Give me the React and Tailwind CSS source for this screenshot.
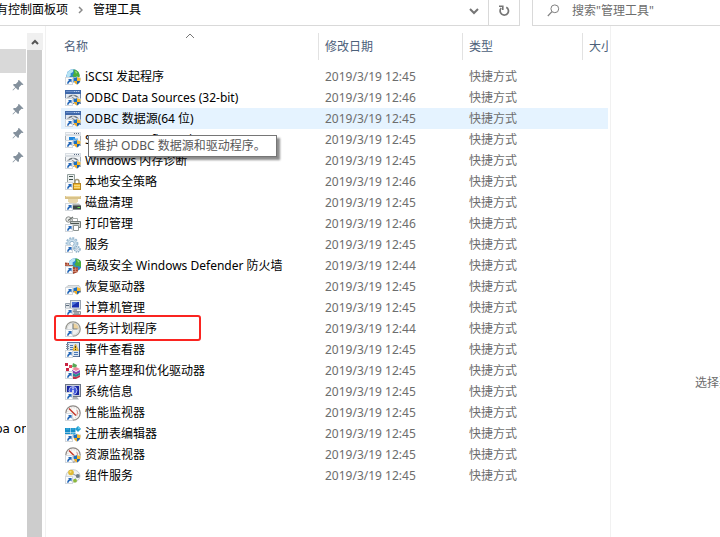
import React from "react";

function Arrow() {
  return (
    <g>
      <rect x="0.5" y="8.5" width="7" height="7" fill="#fdfdfd" stroke="#d3d8dd" />
      <path d="M3 10h3.600v3.600l-1.200-1.200C4.300 13 3.700 13.700 3.500 14.800H2.100c0-1.800.6-2.900 2.100-3.600z" fill="#2467b8" />
    </g>
  );
}

function Shield() {
  return (
    <g>
      <path d="M12 7.200c1.100 1 2.400 1.300 4 1.400 0 3.400-.8 5.900-4 7.400-3.200-1.500-4-4-4-7.400 1.600-.1 2.900-.4 4-1.400z" fill="#d9dde0" />
      <path d="M12 8v4H8.800c-.2-.9-.3-1.700-.3-2.800C9.900 9.100 11 8.800 12 8z" fill="#1c6fc0" />
      <path d="M12 8c1 .8 2.100 1.100 3.500 1.200 0 1.100-.1 1.900-.3 2.800H12z" fill="#f7b92e" />
      <path d="M8.800 12H12v3.500c-1.700-.8-2.700-2-3.200-3.500z" fill="#f0ab22" />
      <path d="M15.200 12H12v3.500c1.700-.8 2.700-2 3.200-3.500z" fill="#1760ac" />
    </g>
  );
}

function WindowFrame({ blue }) {
  return (
    <g>
      <rect x="0.500" y="0.500" width="15" height="13" fill={blue ? "#e3e9f2" : "#f3f5f7"} stroke={blue ? "#7188aa" : "#a6aeb6"} />
      <rect x="0" y="0" width="16" height="4" fill={blue ? "#3f68aa" : "#d9dee3"} />
      <path d="M1 1.500h14" stroke={blue ? "#6b90ca" : "#f3f5f7"} />
      <path d="M9 1.500h1M11 1.500h1M13 1.500h1" stroke={blue ? "#b9cdec" : "#5c6d86"} />
    </g>
  );
}

function Dial() {
  return (
    <g>
      <path d="M2.500 8.500C4 6 6 5.300 8 5.300s4 .7 5.500 3.200" fill="none" stroke="#aeb4ba" strokeWidth="1.600" />
      <path d="M4 6.500l3-1M9.500 5.500l3 1.200" stroke="#5d646b" />
      <path d="M6.500 7l4 1.500-1 1.500z" fill="#3f464d" />
    </g>
  );
}

function Gauge() {
  return (
    <g>
      <circle cx="8" cy="8" r="7.200" fill="#faf8f6" stroke="#8d8986" strokeWidth="1.200" />
      <circle cx="8" cy="8" r="5.300" fill="none" stroke="#d0cac5" strokeDasharray="1 1.500" />
      <path d="M4 3.500l7 7" stroke="#c3392c" strokeWidth="1.500" />
      <path d="M11.800 5.200c1.100 2 .8 3.800-.5 5.300" fill="none" stroke="#d58078" />
    </g>
  );
}

function Globe() {
  return (
    <g>
      <circle cx="8" cy="6.800" r="6.600" fill="#2c87cf" />
      <path d="M2.500 3.500C4 1.300 6.500.2 8.500.3L8 3 5.500 4.500 5.800 6.500 3 9C1.400 7.500 1.500 5 2.500 3.500z" fill="#b7e3f4" />
      <path d="M8.500.4c2.600.1 4.900 1.600 5.700 4.100.6 1.700.4 3.300-.5 4.700L11.500 8 9.500 8.500 7.500 6.500 9 4z" fill="#4aae3d" />
      <path d="M10 1.500l2.500 1.700-1.500 1.500z" fill="#9bd97f" />
      <path d="M3.500 8.500l3-1 2 2-1 3C6 12.400 4.300 11.200 3.500 8.500z" fill="#5cb644" />
    </g>
  );
}

const drawings = {
  globe: <><Globe /><Arrow /><Shield /></>,
  odbc: <><WindowFrame blue /><Dial /><Arrow /><Shield /></>,
  config: (
    <>
      <WindowFrame />
      <path d="M4 5h6v3H4z" fill="#1f86dc" />
      <path d="M8 6.500h5v3H8z" fill="#56aaea" />
      <Arrow /><Shield />
    </>
  ),
  memory: <><WindowFrame /><Dial /><Arrow /><Shield /></>,
  policy: (
    <>
      <path d="M2.500.5h7v12h-7z" fill="#edf0f0" stroke="#93a09e" />
      <path d="M4 2.500h4M4 5.500h4" stroke="#3f524d" />
      <Arrow />
      <path d="M10 10V7.500c0-2.700 4-2.700 4 0V10" fill="none" stroke="#a09777" strokeWidth="1.400" />
      <rect x="8.500" y="9.500" width="7" height="6" fill="#efb935" stroke="#b58522" />
      <path d="M9 11.500h6M9 13.500h6" stroke="#f9da7a" />
    </>
  ),
  disk: (
    <>
      <path d="M0 1h16v3H0z" fill="#d9c288" />
      <path d="M1 1.500h14" stroke="#efdfb4" />
      <path d="M3 4h10v2.500l-2 2H5l-2-2z" fill="#e8d8ac" />
      <path d="M2 8.500h12l2 2v4H1z" fill="#b3b9b7" />
      <rect x="7" y="10.500" width="9" height="4" fill="#3e4946" />
      <path d="M12.500 12.500H15" stroke="#66de51" />
      <Arrow />
    </>
  ),
  printer: (
    <>
      <circle cx="3.500" cy="3.500" r="2.700" fill="#eff0ee" stroke="#858987" />
      <path d="M3 4.500l5-3.500" stroke="#6a706d" strokeWidth="1.300" />
      <path d="M7.500 2.500h5v4h-5z" fill="#fff" stroke="#a9aeac" />
      <path d="M5.500 5.500h10v6h-10z" fill="#cbd0cd" stroke="#747c79" />
      <path d="M6 7.500h8" stroke="#4c5550" />
      <path d="M8.500 9.500h5v5h-5z" fill="#fff" stroke="#8b9290" />
      <Arrow />
    </>
  ),
  services: (
    <>
      <circle cx="7" cy="6.500" r="5.500" fill="#e2eef6" stroke="#9cbbd2" strokeWidth="1.800" strokeDasharray="2 1.200" />
      <circle cx="7" cy="6.500" r="4.300" fill="#cfe2ef" stroke="#a9c6da" />
      <circle cx="7" cy="6.500" r="2.200" fill="#fff" stroke="#8fb1ca" />
      <circle cx="12.300" cy="12.300" r="2.700" fill="#e2eff7" stroke="#86a9c3" strokeWidth="1.500" strokeDasharray="1.400 .8" />
      <circle cx="12.300" cy="12.300" r="1" fill="#fff" stroke="#90adc2" strokeWidth=".6" />
      <Arrow />
    </>
  ),
  firewall: (
    <>
      <g transform="translate(2 0)"><Globe /></g>
      <path d="M0 4.500l4 .5v2l4 .5V9l5 .5V14l-5 2-6-1-2-2z" fill="#a3452f" />
      <path d="M0 6.800l4 .5M8 11.500l5-.5M8 13.500h5M2.500 5v2M10.500 9.500v4.500" stroke="#dc9a82" strokeWidth=".7" />
      <Arrow />
    </>
  ),
  recovery: (
    <>
      <path d="M1 8.500L3 6.500h11l2 3v4H1z" fill="#dde1e3" stroke="#adb4b8" strokeWidth=".6" />
      <path d="M7 9.500h9V13H7z" fill="#59646a" />
      <Arrow /><Shield />
    </>
  ),
  computer: (
    <>
      <rect x="5.500" y=".5" width="10" height="8.500" fill="#dfe5eb" stroke="#98a3b0" />
      <rect x="7" y="2" width="7" height="5.500" fill="#1a2fae" />
      <path d="M7 2h6L7 6z" fill="#4d73d8" />
      <path d="M9 9h3v2h2v1H8v-1z" fill="#a0a8ae" />
      <path d="M.5 3.500H5v6H.5z" fill="#e2e6ea" stroke="#9aa5b0" />
      <path d="M1 5.500h3" stroke="#5c6d7e" />
      <path d="M7.500 11.500h8v3h-8z" fill="#d7dadc" stroke="#8c9499" />
      <path d="M9 13h5" stroke="#66727d" />
      <Arrow />
    </>
  ),
  clock: (
    <>
      <circle cx="8" cy="8" r="7.200" fill="#f1f1ef" stroke="#96968f" strokeWidth="1.300" />
      <path d="M8 2a6 6 0 016 6H8z" fill="#ecd29d" />
      <circle cx="8" cy="8" r="5.900" fill="none" stroke="#d0d3d2" strokeWidth=".7" />
      <path d="M8 2.500V8h4.500" fill="none" stroke="#7b8286" strokeWidth="1.200" />
      <Arrow />
    </>
  ),
  events: (
    <>
      <rect x="2.500" y=".5" width="12" height="14" fill="#dbe6f2" stroke="#5c769e" />
      <path d="M14.500 1v14" stroke="#34507e" />
      <path d="M1 2.500h3M1 4.500h3M1 6.500h3" stroke="#868f99" />
      <path d="M5 3.500h3M5 5.500h3M5 7.500h3M9 10.500h4M9 12.500h4" stroke="#4a77b4" />
      <path d="M10.500 2l3 6.500h-6z" fill="#f5c63c" stroke="#c79a30" strokeWidth=".6" />
      <path d="M10.500 4v2.200M10.500 7v1" stroke="#3c3520" strokeWidth=".9" />
      <Arrow />
    </>
  ),
  defrag: (
    <>
      <path d="M0 0h3v3H0zM1 5h3v3H1z" fill="#c92443" />
      <path d="M4 2h3v3H4z" fill="#e0485d" />
      <path d="M8 0l4 2-1 3-4-1z" fill="#58a856" />
      <path d="M7 6l4-2 4 2-4 2z" fill="#f08aa0" />
      <path d="M7 7l4 2 4-2v2.500l-4 2-4-2z" fill="#8a3fb0" />
      <path d="M7 9.500l4 2 4-2V12l-4 2-4-1z" fill="#258a91" />
      <path d="M7 13l4 1 4-2v2l-4 2H7z" fill="#c2334c" />
      <Arrow />
    </>
  ),
  info: (
    <>
      <rect x=".5" y=".5" width="15" height="12" fill="#c9ced8" stroke="#6f7787" />
      <rect x="2" y="2" width="12" height="9" fill="#1624a2" />
      <circle cx="8" cy="6.500" r="4" fill="#4057d8" stroke="#d4dcfa" strokeWidth=".8" />
      <path d="M8 3.500v1.200M8 5.700v3.600" stroke="#fff" strokeWidth="1.400" />
      <path d="M8 13h4l2 2.500H8z" fill="#a9afb4" />
      <Arrow />
    </>
  ),
  gauge: <><Gauge /><Arrow /></>,
  registry: (
    <>
      <path d="M0 2h5v4H0zM5.500 2h5v4h-5zM0 6.500h5V11H0zM5.500 6.500h5V11h-5z" fill="#168dc8" />
      <path d="M1 3h3M6.500 3h3M6.500 7.500h3" stroke="#43b3e0" />
      <path d="M13 0l3 3-3 3-3-3z" fill="#24a1d3" />
      <path d="M13 0l3 3h-3z" fill="#5cc2e6" />
      <Arrow /><Shield />
    </>
  ),
  resource: <><Gauge /><Arrow /><Shield /></>,
  component: (
    <>
      <ellipse cx="8" cy="8" rx="7" ry="6.300" fill="#eef1f2" stroke="#c9cfd2" />
      <circle cx="6" cy="4.500" r="2.800" fill="#dfba34" />
      <circle cx="5.500" cy="3.800" r="1.100" fill="#f4df7c" />
      <circle cx="12.800" cy="8" r="2" fill="#6e7b85" />
      <circle cx="10" cy="12.700" r="1.900" fill="#8bb83c" />
      <path d="M8 6l3 1.500M10.500 10.500l1-1" stroke="#8f9aa1" />
      <Arrow />
    </>
  ),
};

const files = [
  ["globe", "iSCSI 发起程序", "12:45"],
  ["odbc", "ODBC Data Sources (32-bit)", "12:46"],
  ["odbc", "ODBC 数据源(64 位)", "12:45"],
  ["config", "System Configuration", "12:45"],
  ["memory", "Windows 内存诊断", "12:45"],
  ["policy", "本地安全策略", "12:46"],
  ["disk", "磁盘清理", "12:45"],
  ["printer", "打印管理", "12:46"],
  ["services", "服务", "12:45"],
  ["firewall", "高级安全 Windows Defender 防火墙", "12:44"],
  ["recovery", "恢复驱动器", "12:45"],
  ["computer", "计算机管理", "12:45"],
  ["clock", "任务计划程序", "12:44"],
  ["events", "事件查看器", "12:45"],
  ["defrag", "碎片整理和优化驱动器", "12:45"],
  ["info", "系统信息", "12:45"],
  ["gauge", "性能监视器", "12:45"],
  ["registry", "注册表编辑器", "12:45"],
  ["resource", "资源监视器", "12:45"],
  ["component", "组件服务", "12:45"],
];

function Pin() {
  return (
    <svg width="12" height="12" viewBox="0 0 12 12" className="block" aria-hidden="true">
      <path d="M7 1l4.500 4.500-1 .5-1-.2L7 8.300v2L6 11 3.700 8.700 1 11.500l-.5-.5L3.300 8.200 1 6l.8-1h2L6.200 2.500 6 1.500z" fill="#84919d" />
    </svg>
  );
}

function AddressBar() {
  return (
    <header className="flex h-[26px] shrink-0 items-stretch">
      <div className="flex min-w-0 flex-1 border-r border-b border-[#d9d9d9]">
        <nav aria-label="路径" className="flex min-w-0 flex-1 items-start overflow-hidden whitespace-nowrap leading-5">
          <a href="#panel" className="-ml-1">有控制面板项</a>
          <svg width="5" height="8" viewBox="0 0 5 8" className="mx-2.5 mt-1.5 shrink-0" aria-hidden="true">
            <path d="M1 1l3 3-3 3" fill="none" stroke="#8a8a8a" strokeWidth="1.500" />
          </svg>
          <a href="#tools">管理工具</a>
        </nav>
        <button type="button" aria-label="以前的位置" className="flex w-7 items-start justify-center pt-2">
          <svg width="10" height="7" viewBox="0 0 10 7"><path d="M1 1l4 4 4-4" fill="none" stroke="#757575" strokeWidth="2" /></svg>
        </button>
        <button type="button" aria-label="刷新" className="flex w-[31px] items-start justify-center border-l border-[#d9d9d9] pt-1">
          <svg width="12" height="13" viewBox="0 0 12 13">
            <path d="M8.300 3.200A4.200 4.200 0 113.200 4" fill="none" stroke="#757575" strokeWidth="1.700" />
            <path d="M1 2.200h3.800V6" fill="none" stroke="#757575" strokeWidth="1.600" />
          </svg>
        </button>
      </div>
      <label className="ml-3 flex w-[188px] items-start border-b border-l border-[#d9d9d9] pl-3.5">
        <svg width="13" height="13" viewBox="0 0 13 13" className="mt-1 shrink-0" aria-hidden="true">
          <circle cx="7.800" cy="4.800" r="3.900" fill="none" stroke="#808080" />
          <path d="M5 7.700L.8 12" stroke="#808080" strokeWidth="1.200" />
        </svg>
        <input
          aria-label="搜索"
          placeholder={'搜索"管理工具"'}
          className="ml-3 h-5 min-w-0 flex-1 bg-transparent outline-none placeholder:text-[#6d6d6d]"
        />
      </label>
    </header>
  );
}

function Sidebar() {
  return (
    <aside className="flex w-[46px] shrink-0 border-r border-[#f1f1f1] pt-[7px]">
      <div className="flex w-[27px] flex-col overflow-hidden pt-4">
        <div className="mr-px h-6 shrink-0 bg-[#d9d9d9]" />
        <ul>
          {[0, 1, 2, 3].map((n) => (
            <li key={n} className="flex h-6 items-center pl-3"><Pin /></li>
          ))}
        </ul>
        <div className="mt-[252px] mr-px -ml-[5px] overflow-hidden font-['DejaVu_Sans',sans-serif] leading-4 whitespace-nowrap">pa on</div>
      </div>
      <div className="flex w-[15px] flex-col bg-[#cdcdcd]">
        <button type="button" aria-label="向上滚动" className="flex h-[17px] w-4 items-center justify-center bg-[#f0f0f0]">
          <svg width="8" height="6" viewBox="0 0 8 6"><path d="M1 5l3-3 3 3" fill="none" stroke="#555" strokeWidth="2" /></svg>
        </button>
      </div>
    </aside>
  );
}

function FileTable() {
  return (
    <main className="relative min-w-0 flex-1 overflow-hidden border-r border-[#f1f1f1] pt-[7px] pr-0.5 pl-[15px]">
      <table className="w-full table-fixed border-collapse text-left whitespace-nowrap">
        <colgroup>
          <col />
          <col className="w-36" />
          <col className="w-[120px]" />
          <col className="w-[26px]" />
        </colgroup>
        <thead className="text-[#4c607a]">
          <tr>
            <th className="relative p-0 pb-1.5 font-normal">
              <button type="button" className="block h-[27px] w-full pl-[3px] text-left">名称</button>
              <svg width="10" height="6" viewBox="0 0 10 6" className="absolute top-0 left-1/2 -translate-x-1/2" aria-hidden="true">
                <path d="M1 5l4-4 4 4" fill="none" stroke="#777" />
              </svg>
            </th>
            {["修改日期", "类型", "大小"].map((title) => (
              <th key={title} className="overflow-hidden p-0 pb-1.5 font-normal">
                <button type="button" className="block h-[27px] w-full overflow-hidden border-l border-[#e2e2e2] pl-1.5 text-left">{title}</button>
              </th>
            ))}
          </tr>
        </thead>
        <tbody className="text-[#6d6d6d]">
          {files.map(([icon, name, time], i) => (
            <tr key={name} className={i === 2 ? "h-[21px] bg-[#e5f3ff]" : "h-[21px]"}>
              <td className="p-0 text-black">
                <div className="flex h-[21px] items-center gap-1 pl-1">
                  <svg width="16" height="16" viewBox="0 0 16 16" className="shrink-0" aria-hidden="true">{drawings[icon]}</svg>
                  <span>{name}</span>
                </div>
              </td>
              <td className="p-0 pl-[7px]">2019/3/19 {time}</td>
              <td className="p-0 pl-[7px]">快捷方式</td>
              <td className="p-0" />
            </tr>
          ))}
        </tbody>
      </table>
      <div role="tooltip" className="absolute top-[109px] left-[42px] w-[189px] border border-[#767676] bg-white px-[5px] leading-5 whitespace-nowrap text-[#575757] shadow-[3px_3px_2px_rgba(0,0,0,0.45)]">
        维护 ODBC 数据源和驱动程序。
      </div>
      <div className="pointer-events-none absolute top-[289px] left-2 h-[26px] w-[147px] rounded-[3px] border-2 border-[#fa2420]" />
    </main>
  );
}

export default function App() {
  return (
    <div className="flex h-screen flex-col overflow-hidden bg-white font-['Noto_Sans','Noto_Sans_CJK_SC',sans-serif] text-xs text-black">
      <AddressBar />
      <div className="flex min-h-0 flex-1">
        <Sidebar />
        <FileTable />
        <aside className="flex w-[109px] shrink-0 items-center overflow-hidden pt-[203px] pl-[84px] whitespace-nowrap text-[#6d6d6d]">
          选择要预览的文件。
        </aside>
      </div>
    </div>
  );
}
